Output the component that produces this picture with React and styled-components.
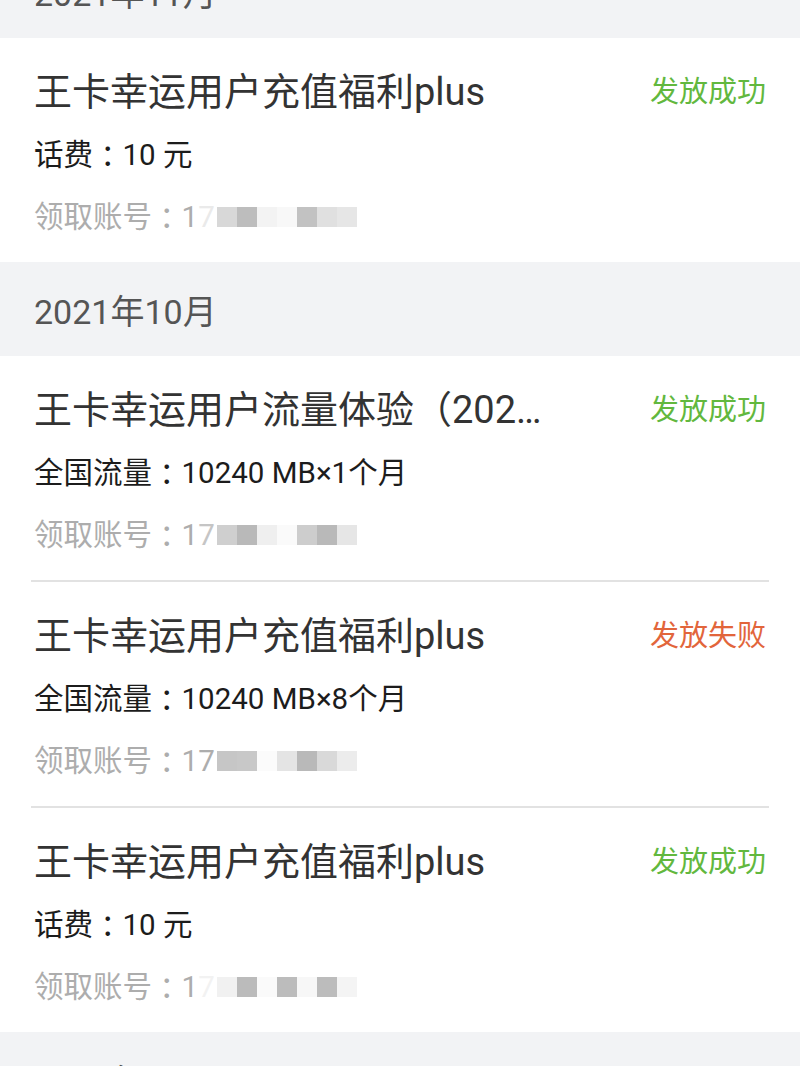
import React from "react";
import styled, { createGlobalStyle } from "styled-components";

const GlobalStyle = createGlobalStyle`
  html, body {
    margin: 0;
    padding: 0;
    background: #f2f3f5;
    font-family: "Roboto", "Noto Sans CJK SC", sans-serif;
    -webkit-font-smoothing: antialiased;
  }
  #root { overflow: hidden; height: 1066px; }
`;

const Scroller = styled.div`
  margin-top: -56px;
  display: flex;
  flex-direction: column;
`;

const MonthHeader = styled.div`
  height: 94px;
  flex: none;
  display: flex;
  align-items: center;
  padding: 0 34px;
  box-sizing: border-box;
  font-size: 34px;
  color: #555;
  background: #f2f3f5;
`;

const Card = styled.div`
  background: #fff;
  display: flex;
  flex-direction: column;
`;

const Item = styled.div`
  margin: 0 31px;
  padding: 32px 3px 25px;
  border-bottom: ${(p) => (p.$last ? "none" : "2px solid #e2e2e2")};
  display: flex;
  flex-direction: column;
`;

const TopRow = styled.div`
  display: flex;
  align-items: center;
  justify-content: space-between;
  height: 44px;
`;

const Title = styled.div`
  flex: 1;
  min-width: 0;
  margin-right: 90px;
  font-size: 38px;
  line-height: 44px;
  color: #333;
  white-space: nowrap;
  overflow: hidden;
  text-overflow: ellipsis;
`;

const Status = styled.div`
  flex: none;
  font-size: 29px;
  line-height: 44px;
  color: ${(p) => (p.$failed ? "#e2653b" : "#62b83e")};
`;

const Detail = styled.div`
  margin-top: 21px;
  height: 40px;
  display: flex;
  align-items: center;
  white-space: pre;
  font-size: 29.5px;
  line-height: 40px;
  color: #1c1c1c;
`;

const Account = styled(Detail)`
  margin-top: 22px;
  color: #adadad;
`;

const Colon = styled.span`
  font-family: "Noto Sans CJK JP", sans-serif;
  line-height: 1;
`;

const Faint = styled.span`
  opacity: ${(p) => p.$o};
`;

const Mosaic = styled.span`
  display: inline-flex;
  margin-left: 2px;
  height: 20px;
`;

const Cell = styled.span`
  width: 20px;
  height: 20px;
  background: ${(p) => p.$c};
`;

const sections = [
  {
    month: "2021年11月",
    items: [
      {
        title: "王卡幸运用户充值福利plus",
        label: "话费",
        value: "10 元",
        seven: 0.25,
        cells: ["#d8d8d8", "#bdbdbd", "#f3f3f3", "#f8f8f8", "#c2c2c2", "#e0e0e0", "#e6e6e6"],
      },
    ],
  },
  {
    month: "2021年10月",
    items: [
      {
        title: "王卡幸运用户流量体验（2021年10月）",
        label: "全国流量",
        value: "10240 MB×1个月",
        seven: 0.7,
        cells: ["#cfcfcf", "#b9b9b9", "#efefef", "#fafafa", "#cdcdcd", "#b9b9b9", "#e6e6e6"],
      },
      {
        title: "王卡幸运用户充值福利plus",
        label: "全国流量",
        value: "10240 MB×8个月",
        failed: true,
        seven: 1,
        cells: ["#c6c6c6", "#c8c8c8", "#fbfbfb", "#e4e4e4", "#b9b9b9", "#d9d9d9", "#ececec"],
      },
      {
        title: "王卡幸运用户充值福利plus",
        label: "话费",
        value: "10 元",
        seven: 0.15,
        cells: ["#f1f1f1", "#bbbbbb", "#fafafa", "#bcbcbc", "#f7f7f7", "#bcbcbc", "#f4f4f4"],
      },
    ],
  },
  { month: "2021年09月", items: [] },
];

export default function App() {
  return (
    <>
      <GlobalStyle />
      <Scroller>
        {sections.map((s) => (
          <React.Fragment key={s.month}>
            <MonthHeader>{s.month}</MonthHeader>
            {s.items.length > 0 && (
              <Card>
                {s.items.map((it, i) => (
                  <Item key={i} $last={i === s.items.length - 1}>
                    <TopRow>
                      <Title>{it.title}</Title>
                      <Status $failed={it.failed}>{it.failed ? "发放失败" : "发放成功"}</Status>
                    </TopRow>
                    <Detail>
                      <span>{it.label}</span>
                      <Colon>：</Colon>
                      <span>{it.value}</span>
                    </Detail>
                    <Account>
                      <span>领取账号</span>
                      <Colon>：</Colon>
                      <span>1</span>
                      <Faint $o={it.seven}>7</Faint>
                      <Mosaic>
                        {it.cells.map((c, j) => (
                          <Cell key={j} $c={c} />
                        ))}
                      </Mosaic>
                    </Account>
                  </Item>
                ))}
              </Card>
            )}
          </React.Fragment>
        ))}
      </Scroller>
    </>
  );
}
